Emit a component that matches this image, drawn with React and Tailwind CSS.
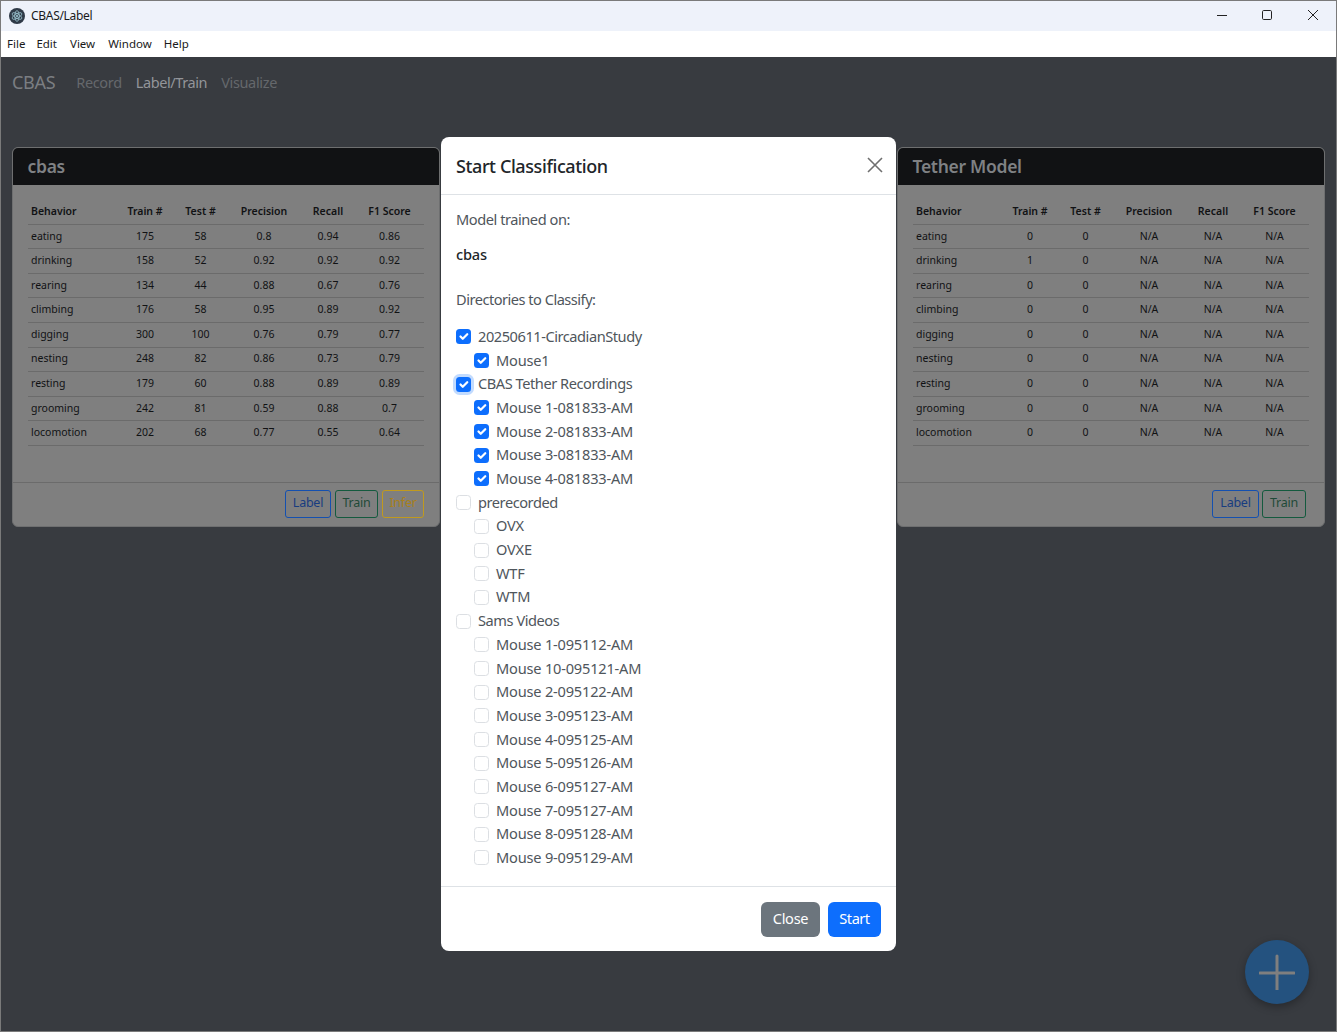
import React from "react";

const FONT = "font-['Noto_Sans','Open_Sans',sans-serif]";

const cbasRows = [
  ["eating", "175", "58", "0.8", "0.94", "0.86"],
  ["drinking", "158", "52", "0.92", "0.92", "0.92"],
  ["rearing", "134", "44", "0.88", "0.67", "0.76"],
  ["climbing", "176", "58", "0.95", "0.89", "0.92"],
  ["digging", "300", "100", "0.76", "0.79", "0.77"],
  ["nesting", "248", "82", "0.86", "0.73", "0.79"],
  ["resting", "179", "60", "0.88", "0.89", "0.89"],
  ["grooming", "242", "81", "0.59", "0.88", "0.7"],
  ["locomotion", "202", "68", "0.77", "0.55", "0.64"],
];
const tetherTrain = ["0", "1", "0", "0", "0", "0", "0", "0", "0"];
const tetherRows = cbasRows.map((r, i) => [r[0], tetherTrain[i], "0", "N/A", "N/A", "N/A"]);
const HEAD = ["Behavior", "Train #", "Test #", "Precision", "Recall", "F1 Score"];

function Row({ cells, head }) {
  return (
    <div className={`grid grid-cols-[88px_58px_53px_74px_54px_69px] h-[24.6px] items-center border-b border-[#6b6b6b] text-[10.5px] text-[#111214] ${head ? "font-semibold" : ""}`}>
      {cells.map((c, i) => (
        <div key={i} className={i === 0 ? "pl-[3px] text-left" : "text-center"}>{c}</div>
      ))}
    </div>
  );
}

function Card({ title, rows, footer, children }) {
  return (
    <div className="w-[428px] h-[380px] flex flex-col rounded-[6px] border border-[#6e6f70] bg-[#7f7f7f] overflow-hidden">
      <div className="h-[37px] shrink-0 bg-[#111214] pl-[14.5px] flex items-center text-[17.5px] font-semibold tracking-[-0.3px] text-[#7f8184]">{title}</div>
      <div className="flex-1 px-[15px] pt-[15px]">
        <Row cells={HEAD} head />
        {rows.map((r) => <Row key={r[0]} cells={r} />)}
      </div>
      <div className={`h-[44px] shrink-0 border-t border-[#6b6b6b] flex justify-end items-start pt-[6.5px] ${footer}`}>
        {children}
      </div>
    </div>
  );
}

function OutlineBtn({ label, cls }) {
  return <button className={`h-[28px] rounded-[3px] border text-[12.5px] tracking-[-0.25px] bg-transparent ${cls}`}>{label}</button>;
}

function Check({ checked, focus }) {
  return (
    <span className={`relative shrink-0 w-[15px] h-[15px] rounded-[3.5px] flex items-center justify-center ${checked ? "bg-[#0d6efd]" : "bg-white border border-[#dcdfe3]"} ${focus ? "shadow-[0_0_0_3px_#c2dbfe]" : ""}`}>
      {checked && (
        <svg viewBox="0 0 20 20" className="w-[15px] h-[15px]" fill="none">
          <path d="M6 10l3 3 6-6" stroke="#fff" strokeWidth="3" strokeLinecap="round" strokeLinejoin="round" />
        </svg>
      )}
    </span>
  );
}

function Dir({ label, checked, focus, child }) {
  return (
    <div className={`h-[23.7px] flex items-center gap-[7px] ${child ? "pl-[18px]" : ""}`}>
      <Check checked={checked} focus={focus} />
      <span className={`text-[14.6px] text-[#4f565c] whitespace-nowrap ${child ? "tracking-[-0.2px]" : "tracking-[-0.45px]"}`}>{label}</span>
    </div>
  );
}

const dirs = [
  ["20250611-CircadianStudy", true, false, false],
  ["Mouse1", true, true, false],
  ["CBAS Tether Recordings", true, false, true],
  ["Mouse 1-081833-AM", true, true, false],
  ["Mouse 2-081833-AM", true, true, false],
  ["Mouse 3-081833-AM", true, true, false],
  ["Mouse 4-081833-AM", true, true, false],
  ["prerecorded", false, false, false],
  ["OVX", false, true, false],
  ["OVXE", false, true, false],
  ["WTF", false, true, false],
  ["WTM", false, true, false],
  ["Sams Videos", false, false, false],
  ["Mouse 1-095112-AM", false, true, false],
  ["Mouse 10-095121-AM", false, true, false],
  ["Mouse 2-095122-AM", false, true, false],
  ["Mouse 3-095123-AM", false, true, false],
  ["Mouse 4-095125-AM", false, true, false],
  ["Mouse 5-095126-AM", false, true, false],
  ["Mouse 6-095127-AM", false, true, false],
  ["Mouse 7-095127-AM", false, true, false],
  ["Mouse 8-095128-AM", false, true, false],
  ["Mouse 9-095129-AM", false, true, false],
];

function ElectronLogo() {
  return (
    <svg viewBox="0 0 16 16" className="w-[16px] h-[16px]">
      <circle cx="8" cy="8" r="8" fill="#2f3a47" />
      <g fill="none" stroke="#a9d4e0" strokeWidth="0.7">
        <ellipse cx="8" cy="8" rx="5.4" ry="2.2" transform="rotate(30 8 8)" />
        <ellipse cx="8" cy="8" rx="5.4" ry="2.2" transform="rotate(90 8 8)" />
        <ellipse cx="8" cy="8" rx="5.4" ry="2.2" transform="rotate(150 8 8)" />
      </g>
      <circle cx="8" cy="8" r="1" fill="#a9d4e0" />
    </svg>
  );
}

export default function App() {
  return (
    <div className={`${FONT} w-[1337px] h-[1032px] flex flex-col border border-[#7a7a7a] overflow-hidden bg-[#383b40]`}>
      <div className="h-[30px] shrink-0 bg-[#eef2fa] flex items-center pl-[8px] text-[12px] tracking-[-0.3px] text-[#1a1a1a]">
        <ElectronLogo />
        <span className="ml-[6px]">CBAS/Label</span>
        <div className="ml-auto flex items-center">
          <svg viewBox="0 0 46 30" className="w-[46px] h-[30px]"><path d="M19 14.5h10" stroke="#222" strokeWidth="1" /></svg>
          <svg viewBox="0 0 46 30" className="w-[46px] h-[30px]"><rect x="18.5" y="9.5" width="9" height="9" rx="1.2" fill="none" stroke="#222" strokeWidth="1" /></svg>
          <svg viewBox="0 0 46 30" className="w-[46px] h-[30px]"><path d="M18 9l10 10M28 9L18 19" stroke="#222" strokeWidth="1" /></svg>
        </div>
      </div>
      <div className="h-[26px] shrink-0 bg-white flex items-center pl-[6px] text-[11.5px] text-[#1a1a1a]">
        <span>File</span>
        <span className="ml-[11px]">Edit</span>
        <span className="ml-[13px]">View</span>
        <span className="ml-[13px]">Window</span>
        <span className="ml-[12px]">Help</span>
      </div>
      <div className="relative flex-1">
        <div className="h-[52px] flex items-center pl-[11px] pb-[1px]">
          <span className="text-[18px] tracking-[-0.3px] text-[#7b7e82]">CBAS</span>
          <span className="ml-[21px] text-[14.5px] tracking-[-0.35px] text-[#65686c]">Record</span>
          <span className="ml-[14px] text-[14.5px] tracking-[-0.4px] text-[#93959a]">Label/Train</span>
          <span className="ml-[14px] text-[14.5px] tracking-[-0.35px] text-[#65686c]">Visualize</span>
        </div>
        <div className="mt-[38px] px-[11px] flex justify-between">
          <Card title="cbas" rows={cbasRows} footer="pr-[15px] gap-[4px]">
            <OutlineBtn label="Label" cls="w-[46px] border-[#1450b0] text-[#183c80]" />
            <OutlineBtn label="Train" cls="w-[43px] border-[#145a3e] text-[#1f4a38]" />
            <OutlineBtn label="Infer" cls="w-[42px] border-[#c09a1e] text-[#a8801c]" />
          </Card>
          <Card title="Tether Model" rows={tetherRows} footer="pr-[18px] gap-[3px]">
            <OutlineBtn label="Label" cls="w-[47px] border-[#1450b0] text-[#183c80]" />
            <OutlineBtn label="Train" cls="w-[44px] border-[#145a3e] text-[#1f4a38]" />
          </Card>
        </div>

        <div className="absolute left-[440px] top-[80px] w-[455px] h-[814px] bg-white rounded-[8px] flex flex-col">
          <div className="h-[58px] shrink-0 border-b border-[#dee2e6] flex items-center justify-between pl-[15px] pr-[12px] pt-[1px]">
            <span className="text-[18px] font-medium tracking-[-0.4px] text-[#212529]">Start Classification</span>
            <svg viewBox="0 0 18 18" className="w-[18px] h-[18px] -mt-[2px]"><path d="M2 2l14 14M16 2L2 16" stroke="#6f6f6f" strokeWidth="1.6" /></svg>
          </div>
          <div className="flex-1 pl-[15px] pt-[13px]">
            <p className="text-[14.6px] tracking-[-0.45px] text-[#4f565c] leading-[22px]">Model trained on:</p>
            <p className="mt-[13px] text-[14.6px] tracking-[-0.2px] font-medium text-[#212529] leading-[22px]">cbas</p>
            <p className="mt-[23px] text-[14.6px] tracking-[-0.5px] text-[#4f565c] leading-[22px]">Directories to Classify:</p>
            <div className="mt-[15px]">
              {dirs.map(([l, c, ch, f]) => <Dir key={l} label={l} checked={c} child={ch} focus={f} />)}
            </div>
          </div>
          <div className="h-[65px] shrink-0 border-t border-[#dee2e6] flex items-center justify-end gap-[8px] pr-[15px]">
            <button className="h-[35px] w-[59px] pb-[1px] rounded-[6px] bg-[#6c757d] text-white text-[14.6px] tracking-[-0.3px]">Close</button>
            <button className="h-[35px] w-[53px] pb-[1px] rounded-[6px] bg-[#0d6efd] text-white text-[14.6px] tracking-[-0.5px]">Start</button>
          </div>
        </div>

        <div className="absolute left-[1244px] top-[883px] w-[64px] h-[64px] rounded-full bg-[#24527f] shadow-[0_3px_8px_rgba(0,0,0,0.3)] flex items-center justify-center">
          <svg viewBox="0 0 36 36" className="w-[36px] h-[36px]"><path d="M18 2v34M1 19h34" stroke="#7f7f7f" strokeWidth="3" strokeLinecap="round" /></svg>
        </div>
      </div>
    </div>
  );
}
